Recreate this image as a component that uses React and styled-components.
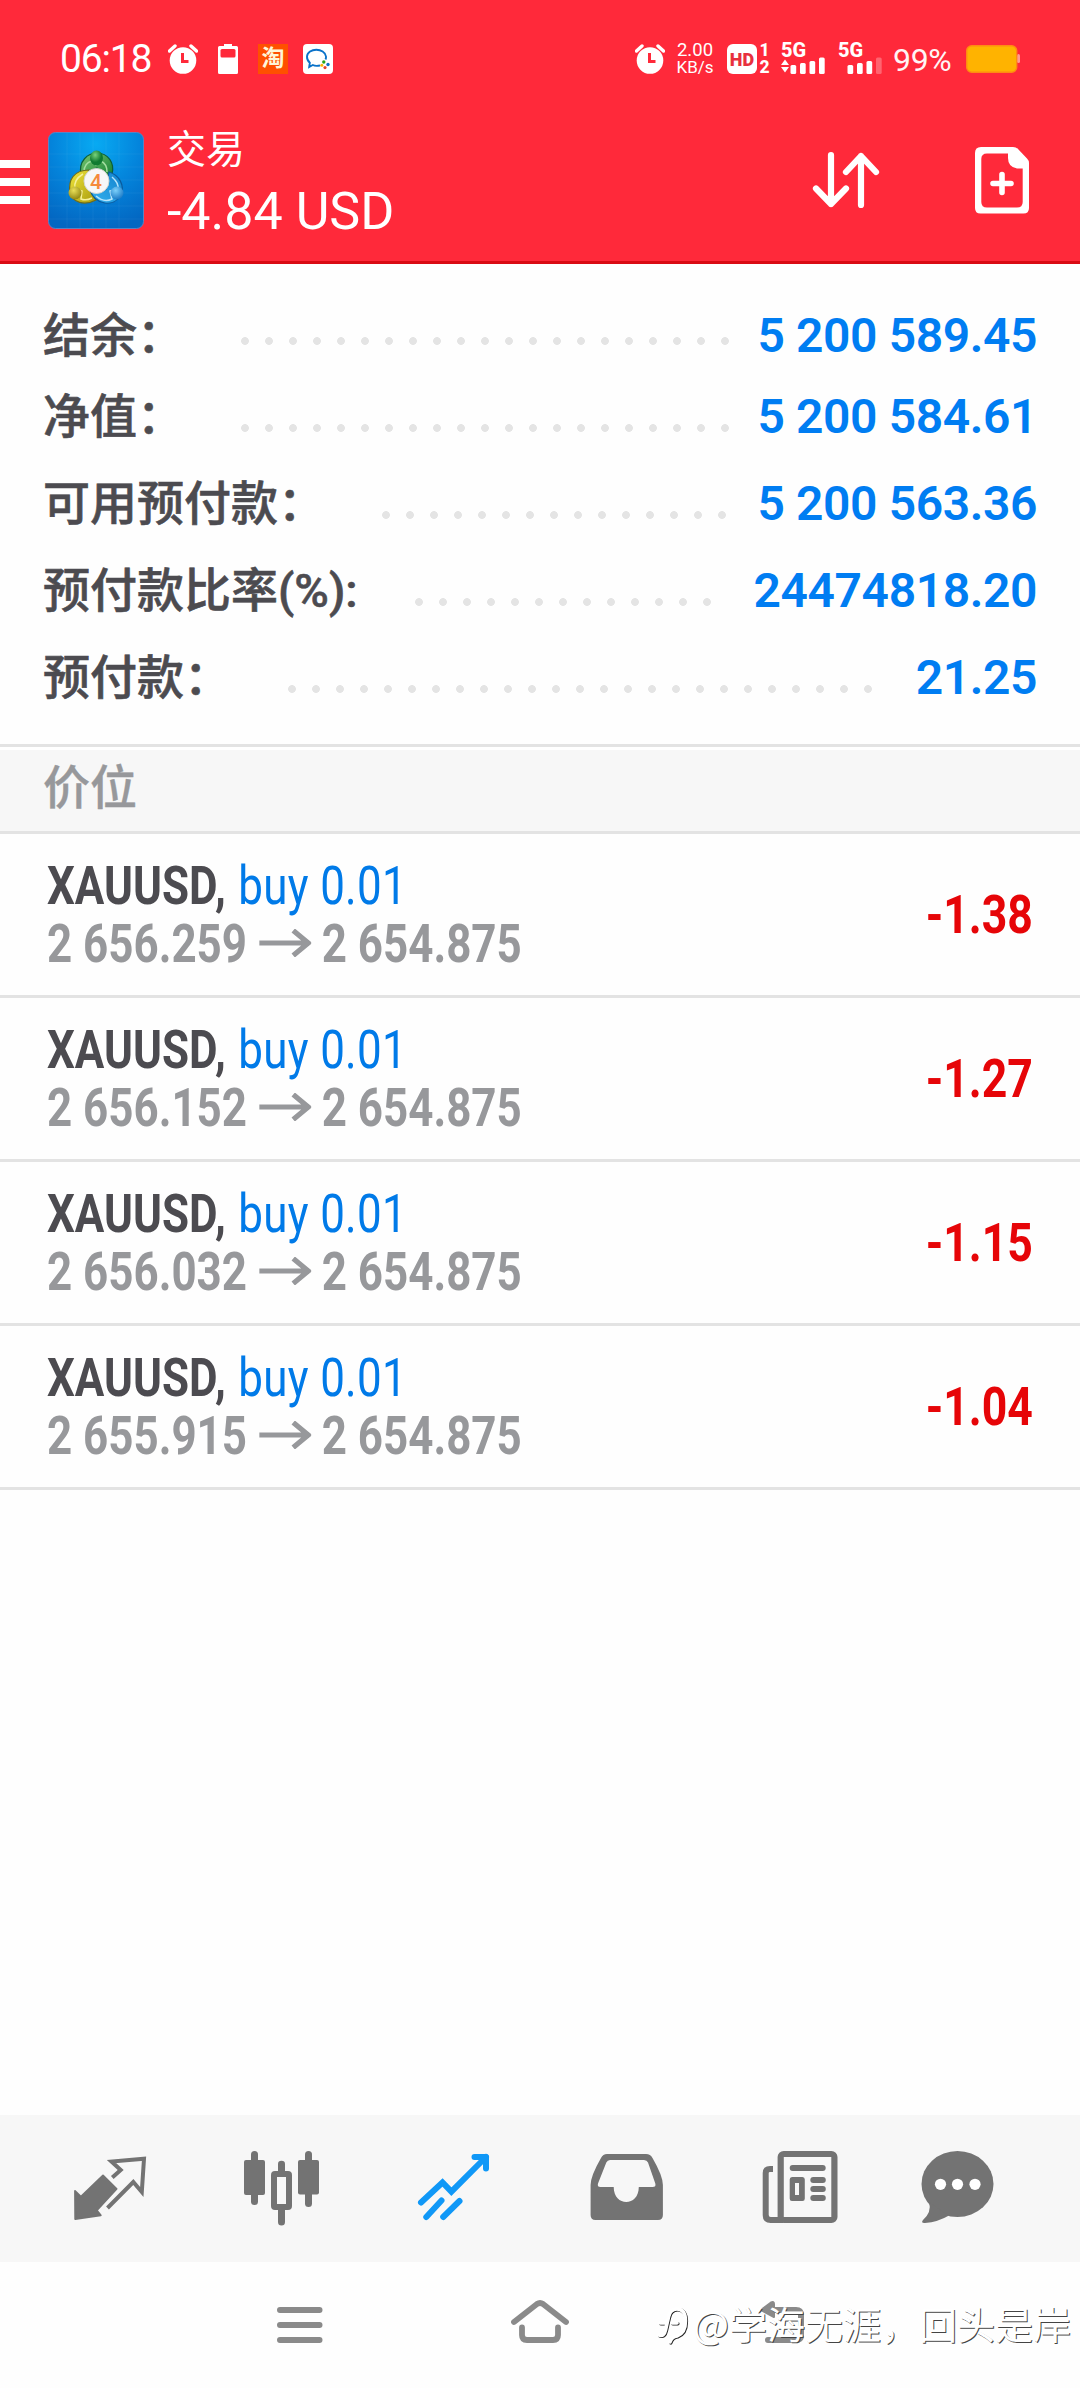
import React from 'react'
import styled, { createGlobalStyle } from 'styled-components'

const summary = [
    { label: '结余：', value: '5 200 589.45' },
    { label: '净值：', value: '5 200 584.61' },
    { label: '可用预付款：', value: '5 200 563.36' },
    { label: '预付款比率(%):', value: '24474818.20' },
    { label: '预付款：', value: '21.25' },
]

const positions = [
    { open: '2 656.259', current: '2 654.875', profit: '-1.38' },
    { open: '2 656.152', current: '2 654.875', profit: '-1.27' },
    { open: '2 656.032', current: '2 654.875', profit: '-1.15' },
    { open: '2 655.915', current: '2 654.875', profit: '-1.04' },
]

function AlarmIcon() {
    return (
        <svg width="30" height="30" viewBox="0 0 30 30">
            <circle cx="15" cy="16.5" r="13.3" fill="#fff" />
            <path d="M1.5 7 L7 2 M28.500 7 L23 2" stroke="#fff" strokeWidth="3.4" strokeLinecap="round" />
            <path d="M14.500 9 V17.500 H20.500" fill="none" stroke="#ff293a" strokeWidth="3" />
        </svg>
    )
}

function SmallBattery() {
    return (
        <svg width="20" height="30" viewBox="0 0 20 30">
            <path d="M6 0 H14 V2 H18.500 Q20 2 20 3.500 V28.500 Q20 30 18.500 30 H1.500 Q0 30 0 28.500 V3.500 Q0 2 1.500 2 H6 Z" fill="#fff" />
            <rect x="2.500" y="5" width="15" height="8.500" rx="1.500" fill="#ff293a" />
        </svg>
    )
}

function WorkChatIcon() {
    return (
        <svg width="30" height="30" viewBox="0 0 30 30">
            <rect width="30" height="30" rx="4" fill="#fff" />
            <path d="M17 21.500 Q12.500 22.500 9.800 21 L6.200 23 L6.800 18.800 Q3.800 16 4 12.500 C4.500 3.500 22 3.500 23 12.500 Q23.200 14 22.500 15.500" fill="none" stroke="#0a72c9" strokeWidth="1.9" />
            <circle cx="20.800" cy="18" r="1.700" fill="#2aa515" />
            <circle cx="25" cy="20.500" r="1.700" fill="#0a72c9" />
            <circle cx="18.800" cy="21.200" r="1.500" fill="#fbb400" />
            <circle cx="22" cy="23.600" r="1.600" fill="#e8452a" />
        </svg>
    )
}

function SignalBars({ weak }) {
    return (
        <svg width="46" height="17" viewBox="0 0 46 17">
            {!weak && <path d="M0 8 L4 2.500 L8 8 Z M0 10 L4 15.500 L8 10 Z" fill="#fff" />}
            <rect x="9.500" y="8" width="5.700" height="9" rx="1.500" fill="#fff" />
            <rect x="19" y="6" width="5.700" height="11" rx="1.500" fill="#fff" />
            <rect x="28.500" y="4" width="5.700" height="13" rx="1.500" fill="#fff" />
            <rect x="38" y="0.500" width="5.700" height="16.500" rx="1.500" fill="#fff" opacity={weak ? 0.28 : 1} />
        </svg>
    )
}

function BatteryIcon() {
    return (
        <svg width="54" height="28" viewBox="0 0 54 28">
            <rect x="51" y="9" width="3" height="9" rx="1.500" fill="#ff9a94" />
            <rect x="0.700" y="0.700" width="50" height="26.600" rx="5" fill="#ffb300" stroke="#ff8a12" strokeWidth="1.400" />
        </svg>
    )
}

function AppLogo() {
    return (
        <svg width="96" height="97" viewBox="0 0 96 97">
            <defs>
                <radialGradient id="sky" cx="0.5" cy="0.12" r="0.9">
                    <stop offset="0" stopColor="#08aaf2" />
                    <stop offset="0.5" stopColor="#0485dc" />
                    <stop offset="1" stopColor="#0367c2" />
                </radialGradient>
                <linearGradient id="green" x1="0" y1="0" x2="1" y2="1">
                    <stop offset="0" stopColor="#7cc873" />
                    <stop offset="1" stopColor="#0b7a2c" />
                </linearGradient>
                <linearGradient id="yellow" x1="0" y1="0" x2="1" y2="1">
                    <stop offset="0" stopColor="#f0e63c" />
                    <stop offset="1" stopColor="#a89a0c" />
                </linearGradient>
                <linearGradient id="blue" x1="1" y1="0" x2="0" y2="1">
                    <stop offset="0" stopColor="#1282cd" />
                    <stop offset="1" stopColor="#35b2f0" />
                </linearGradient>
                <radialGradient id="greenHead" cx="0.4" cy="0.3" r="0.8">
                    <stop offset="0" stopColor="#79d27c" />
                    <stop offset="0.6" stopColor="#107a30" />
                </radialGradient>
                <radialGradient id="yellowHead" cx="0.4" cy="0.3" r="0.8">
                    <stop offset="0" stopColor="#e9df58" />
                    <stop offset="1" stopColor="#857a08" />
                </radialGradient>
                <radialGradient id="blueHead" cx="0.4" cy="0.3" r="0.8">
                    <stop offset="0" stopColor="#7cd0fa" />
                    <stop offset="1" stopColor="#0f6fc0" />
                </radialGradient>
            </defs>
            <rect x="0.500" y="0.500" width="95" height="96" rx="7" fill="url(#sky)" stroke="#5a83c4" />
            <path d="M19 1 V96 M32 1 V96 M45 1 V96 M58 1 V96 M71 1 V96 M1 22 H95 M1 35 H95 M1 48 H95 M1 61 H95 M1 74 H95 M1 87 H95" stroke="#fff" strokeOpacity="0.05" />
            <path d="M33 43 C30 29 40 21 49 21 C60 21 67 31 64 42 L61 50 L49 36 Z" fill="url(#green)" stroke="#0d5f38" strokeWidth="1.200" />
            <path d="M36 40 Q36 31 44 29 L48 33 L53 29 Q59 32 59 40" fill="none" stroke="#a3dda0" strokeWidth="1.500" />
            <path d="M41 38 C26 38 20 48 22 60 C24 71 37 74 48 68 L40 56 Z" fill="url(#yellow)" stroke="#6d6b1c" strokeWidth="1.200" />
            <path d="M35 42 Q25 48 27 57 L34 59 L33 67 Q38 69 44 66" fill="none" stroke="#f6f09a" strokeWidth="1.500" />
            <path d="M61 40 C71 43 77 53 73 63 C66 76 47 73 42 58 L58 57 Z" fill="url(#blue)" stroke="#0b5a9c" strokeWidth="1.200" />
            <path d="M64 45 Q71 51 70 57 L62 59 L64 67 Q56 71 48 64" fill="none" stroke="#b6e4fb" strokeWidth="1.500" />
            <ellipse cx="48.500" cy="26" rx="6.500" ry="7.500" fill="url(#greenHead)" />
            <ellipse cx="27" cy="61" rx="6.500" ry="6.500" fill="url(#yellowHead)" />
            <ellipse cx="69" cy="61" rx="6.500" ry="6.500" fill="url(#blueHead)" />
            <circle cx="48.500" cy="49" r="12.500" fill="#f7f7f7" stroke="#d3d6d0" />
            <text x="48" y="56.500" textAnchor="middle" fontFamily="Roboto, sans-serif" fontWeight="500" fontSize="21" fill="#f58a3c">4</text>
        </svg>
    )
}

function SortIcon() {
    return (
        <svg width="70" height="60" viewBox="0 0 70 60">
            <g fill="none" stroke="#fff" strokeWidth="6.200" strokeLinecap="round" strokeLinejoin="round">
                <path d="M20 5 V54 M5 38.500 L20 54 L35 38.500" />
                <path d="M50 55 V6 M35 22 L50 6 L65 22" />
            </g>
        </svg>
    )
}

function NewOrderIcon() {
    return (
        <svg width="54" height="67" viewBox="0 0 54 67">
            <path fillRule="evenodd" fill="#fff" d="M6 0 H38 Q41 0 43 2 L52 11.500 Q54 13.500 54 16 V61 Q54 66.500 48.500 66.500 H5.500 Q0 66.500 0 61 V6 Q0 0 6 0 Z M12 6.500 Q6.300 6.500 6.300 12 V55 Q6.300 60.500 12 60.500 H42 Q47.700 60.500 47.700 55 V21.500 H42 Q33 20 33 11 V6.500 Z" />
            <path d="M27 27.500 V45.500 M18 36.500 H36" stroke="#fff" strokeWidth="5.600" strokeLinecap="round" />
        </svg>
    )
}

function PriceArrow() {
    return (
        <svg width="64" height="28" viewBox="0 0 52 28" preserveAspectRatio="none">
            <path d="M0 14 H49 M34 1.500 L49 14 L34 26.500" fill="none" stroke="#97989b" strokeWidth="5.200" />
        </svg>
    )
}

function QuotesIcon() {
    return (
        <svg width="100" height="100" viewBox="0 0 100 100">
            <path d="M15 53 L20.900 58.700 L43 37.500 L56.600 51 L36.800 72.300 L40.800 77.300 L15.200 81 Z" fill="#737373" stroke="#737373" strokeWidth="1.800" strokeLinejoin="round" />
            <path d="M52.300 39.500 L60.700 32 L51.500 23.500 L84 20.800 L81.800 54 L73.300 44 L47.500 70" fill="none" stroke="#737373" strokeWidth="4" />
        </svg>
    )
}

function ChartIcon() {
    return (
        <svg width="100" height="100" viewBox="0 0 100 100" fill="#737373">
            <rect x="12" y="22" width="21" height="35" rx="2" />
            <rect x="19" y="13" width="7" height="54" rx="3.500" />
            <rect x="66" y="22" width="21" height="34.500" rx="2" />
            <rect x="73" y="13" width="7" height="56" rx="3.500" />
            <path d="M46 34 V26 Q46 22.700 49.500 22.700 Q53 22.700 53 26 V34 Z M46 71 V84 Q46 87.500 49.500 87.500 Q53 87.500 53 84 V71 Z" />
            <rect x="42" y="36" width="15" height="33" rx="1" fill="#f7f7f7" stroke="#737373" strokeWidth="6" strokeLinejoin="round" />
        </svg>
    )
}

function TradeIcon() {
    return (
        <svg width="100" height="100" viewBox="0 0 100 100">
            <g fill="none" stroke="#1098f7" strokeWidth="6" strokeLinecap="round">
                <path d="M17 64.500 L38.500 44.500 L47.400 53.700 L82 19" strokeLinecap="round" />
                <path d="M22.300 79 L37.500 62.500 M39.200 79 L55.500 63" />
                <path d="M70.500 19 H82 V30.500" strokeLinejoin="round" />
            </g>
            <path d="M74 18 H83 V28 Z" fill="#1098f7" />
        </svg>
    )
}

function HistoryIcon() {
    return (
        <svg width="100" height="100" viewBox="0 0 100 100">
            <path fillRule="evenodd" fill="#737373" d="M31 16 H70 Q74.500 16 76.500 20 Q86.900 38 86.900 47 V77 Q86.900 82 82 82 H19.500 Q14.600 82 14.600 77 V47 Q14.600 38 25 20 Q27 16 31 16 Z M34 22 Q31.500 22 30.300 24.500 L22 45.500 Q21 49 24.500 49 H37.700 C37.700 69 62.800 69 62.800 49 H76.500 Q80.300 49 79.300 45.500 L72 24.500 Q71 22 68 22 Z" />
        </svg>
    )
}

function NewsIcon() {
    return (
        <svg width="100" height="100" viewBox="0 0 100 100" fill="#737373">
            <rect x="32.700" y="16" width="53.700" height="66" rx="3" fill="none" stroke="#737373" strokeWidth="6.200" />
            <path d="M25 31 H22 Q17.700 31 17.700 35 V77 Q17.700 82 22.700 82 H35" fill="none" stroke="#737373" strokeWidth="6" />
            <rect x="41.700" y="27" width="36" height="6" rx="3" />
            <path fillRule="evenodd" d="M44 39 H54.500 Q56.800 39 56.800 41.500 V60.500 Q56.800 63 54.500 63 H44 Q41.700 63 41.700 60.500 V41.500 Q41.700 39 44 39 Z M47 45 V57 H51 V45 Z" />
            <rect x="62.300" y="39" width="15.500" height="6" rx="3" />
            <rect x="62.300" y="48" width="15.500" height="6" rx="3" />
            <rect x="62.300" y="57" width="15.500" height="6" rx="3" />
        </svg>
    )
}

function MessagesIcon() {
    return (
        <svg width="100" height="100" viewBox="0 0 100 100">
            <ellipse cx="37.500" cy="46" rx="36" ry="33" fill="#737373" />
            <path d="M9 64 Q12 74 3 82 Q0.500 85.300 5 85 Q18 84 29 77.500 Z" fill="#737373" />
            <circle cx="20.500" cy="46.300" r="5.600" fill="#fff" />
            <circle cx="37.500" cy="46.300" r="5.600" fill="#fff" />
            <circle cx="55" cy="46.300" r="5.600" fill="#fff" />
        </svg>
    )
}

function RecentsKey() {
    return (
        <svg width="60" height="60" viewBox="0 0 60 60">
            <path d="M10 15 H49.500 M10 30 H49.500 M10 45 H49.500" stroke="#8a8a8a" strokeWidth="6" strokeLinecap="round" />
        </svg>
    )
}

function HomeKey() {
    return (
        <svg width="60" height="60" viewBox="0 0 60 60">
            <g fill="none" stroke="#8a8a8a" strokeWidth="5.800" strokeLinecap="round" strokeLinejoin="round">
                <path d="M4 27 L27 9 Q30 7 33 9 L56 27" />
                <path d="M12 32.500 V40 Q12 45 17 45 H43 Q48 45 48 40 V32.500" />
            </g>
        </svg>
    )
}

function BackKey() {
    return (
        <svg width="60" height="60" viewBox="0 0 60 60">
            <path d="M18 45 H46 Q51 45 51 40 V20 Q51 15 46 15 H18" fill="none" stroke="#8a8a8a" strokeWidth="6" strokeLinecap="round" />
            <path d="M11 15 L21 7.500 Q24 6 24 9 V22 Z" fill="#8a8a8a" stroke="#8a8a8a" strokeWidth="2" strokeLinejoin="round" />
        </svg>
    )
}

function WatermarkMark() {
    return (
        <svg width="32" height="44" viewBox="0 0 32 44">
            <g fill="none" strokeLinecap="round" strokeLinejoin="round">
                <path d="M2 34 Q7 36 8.500 29 L11.500 16 Q13 8 20 8 Q28.500 8 28.500 20 Q28.500 32 20 35 Q14.500 36 13 41 M3 22 H8.500 M15 22 H20" stroke="#222" strokeWidth="3.600" transform="translate(0.8 0.8)" />
                <path d="M2 34 Q7 36 8.500 29 L11.500 16 Q13 8 20 8 Q28.500 8 28.500 20 Q28.500 32 20 35 Q14.500 36 13 41 M3 22 H8.500 M15 22 H20" stroke="#fff" strokeWidth="3.600" />
            </g>
        </svg>
    )
}

function App() {
    return (
        <Screen>
            <GlobalStyle />
            <Header>
                <StatusBar>
                    <Clock>06:18</Clock>
                    <StatusIcons>
                        <AlarmIcon />
                        <SmallBattery />
                        <Taobao>淘</Taobao>
                        <WorkChatIcon />
                    </StatusIcons>
                    <StatusRight>
                        <AlarmIcon />
                        <NetSpeed>
                            <span>2.00</span>
                            <span>KB/s</span>
                        </NetSpeed>
                        <HdBadge>HD</HdBadge>
                        <SimNumbers>
                            <span>1</span>
                            <span>2</span>
                        </SimNumbers>
                        <Signal>
                            <span>5G</span>
                            <SignalBars />
                        </Signal>
                        <Signal>
                            <span>5G</span>
                            <SignalBars weak />
                        </Signal>
                        <Percent>99%</Percent>
                        <BatteryIcon />
                    </StatusRight>
                </StatusBar>
                <Toolbar>
                    <MenuButton>
                        <i />
                        <i />
                        <i />
                    </MenuButton>
                    <AppLogo />
                    <Titles>
                        <Title>交易</Title>
                        <Total>-4.84 USD</Total>
                    </Titles>
                    <Actions>
                        <SortIcon />
                        <NewOrderIcon />
                    </Actions>
                </Toolbar>
            </Header>

            <Summary>
                {summary.map((item) => (
                    <SummaryRow key={item.label}>
                        <Label>{item.label}</Label>
                        <Dots />
                        <Value>{item.value}</Value>
                    </SummaryRow>
                ))}
            </Summary>

            <SectionTitle>价位</SectionTitle>

            <Positions>
                {positions.map((p) => (
                    <PositionRow key={p.open}>
                        <Details>
                            <Symbol>
                                XAUUSD, <Side>buy 0.01</Side>
                            </Symbol>
                            <Prices>
                                {p.open}
                                <PriceArrow />
                                {p.current}
                            </Prices>
                        </Details>
                        <Profit>{p.profit}</Profit>
                    </PositionRow>
                ))}
            </Positions>

            <TabBar>
                <QuotesIcon />
                <ChartIcon />
                <TradeIcon />
                <HistoryIcon />
                <NewsIcon />
                <MessagesIcon />
            </TabBar>

            <SystemNav>
                <RecentsKey />
                <HomeKey />
                <BackKey />
                <Watermark>
                    <WatermarkMark />
                    <span>@学海无涯，回头是岸</span>
                </Watermark>
            </SystemNav>
        </Screen>
    )
}

export default App

const GlobalStyle = createGlobalStyle`
    body {
        margin: 0;
        background: #fff;
    }

    svg {
        display: block;
        flex-shrink: 0;
    }
`

const Screen = styled.div`
    width: 1080px;
    height: 2388px;
    display: flex;
    flex-direction: column;
    overflow: hidden;
    background: #fefefe;
    font-family: Roboto, "Noto Sans CJK SC", sans-serif;
    white-space: nowrap;
`

const Header = styled.div`
    box-sizing: border-box;
    height: 264px;
    background: #ff293a;
    border-bottom: 3px solid #d90b14;
    color: #fff;
`

const StatusBar = styled.div`
    height: 118px;
    display: flex;
    align-items: center;
    padding: 0 60px;
`

const Clock = styled.div`
    width: 108px;
    font-size: 39px;
    letter-spacing: -1.2px;
`

const StatusIcons = styled.div`
    display: flex;
    align-items: center;

    svg:nth-child(2) {
        margin: 0 20px;
    }

    svg:nth-child(4) {
        margin-left: 15px;
    }
`

const Taobao = styled.div`
    width: 30px;
    height: 30px;
    background: #ff5000;
    color: #fff6d8;
    font-size: 23px;
    font-weight: 700;
    line-height: 30px;
    text-align: center;
`

const StatusRight = styled.div`
    margin-left: auto;
    display: flex;
    align-items: center;
`

const NetSpeed = styled.div`
    width: 40px;
    margin-left: 10px;
    display: flex;
    flex-direction: column;
    align-items: center;
    font-size: 18.5px;
    line-height: 17px;

    span + span {
        font-size: 17px;
    }
`

const HdBadge = styled.div`
    width: 30px;
    height: 30px;
    margin-left: 12px;
    border-radius: 6px;
    background: #fff;
    color: #e8303e;
    font-size: 18px;
    font-weight: 900;
    line-height: 31px;
    text-align: center;
`

const SimNumbers = styled.div`
    width: 13px;
    margin-left: 1px;
    display: flex;
    flex-direction: column;
    align-items: center;
    font-size: 17.5px;
    font-weight: 800;
    line-height: 17px;
`

const Signal = styled.div`
    width: 46px;
    height: 30px;
    margin-left: 10px;
    display: flex;
    flex-direction: column;
    font-size: 20px;
    font-weight: 800;
    line-height: 13px;

    & + & {
        margin-left: 11px;
    }
`

const Percent = styled.div`
    width: 64px;
    margin: 2px 9px 0 9px;
    font-size: 32px;
    font-weight: 400;
    letter-spacing: -0.3px;
    opacity: 0.95;
`

const Toolbar = styled.div`
    height: 124px;
    display: flex;
    align-items: center;
    padding-right: 51px;
`

const MenuButton = styled.div`
    width: 30px;
    margin: 4px 18px 0 0;
    display: flex;
    flex-direction: column;
    gap: 10px;

    i {
        height: 8px;
        background: #fff;
    }
`

const Titles = styled.div`
    margin: 2px 0 0 23px;
    line-height: 61px;
`

const Title = styled.div`
    font-size: 39px;
`

const Total = styled.div`
    font-size: 52px;
`

const Actions = styled.div`
    margin-left: auto;
    display: flex;
    align-items: center;
    gap: 94px;
`

const Summary = styled.div`
    box-sizing: border-box;
    height: 480px;
    padding-top: 22px;
`

const Label = styled.div`
    color: #4c4b50;
    font-size: 47px;
    font-weight: 500;
    line-height: 58px;
    -webkit-text-stroke: 0.6px #4c4b50;
`

const Value = styled.div`
    color: #007df2;
    font-size: 48px;
    font-weight: 600;
    letter-spacing: -0.4px;
    line-height: 58px;
`

const Dots = styled.div`
    flex: 1;
    height: 8px;
    margin: 23px 28px 0 49px;
    background: radial-gradient(circle, #e4e4e4 3.500px, transparent 4.300px) 0 0 / 24px 8px;
`

const SummaryRow = styled.div`
    height: 87px;
    display: flex;
    align-items: center;
    padding: 0 43px;

    &:first-child ${Label}, &:first-child ${Value} {
        margin-top: 12px;
    }
`

const SectionTitle = styled.div`
    box-sizing: border-box;
    height: 90px;
    padding-left: 43px;
    border-top: 3px solid #e3e3e3;
    border-bottom: 3px solid #e3e3e3;
    box-shadow: inset 0 3px 0 #fff;
    background: #f7f7f7;
    color: #97989b;
    font-size: 47px;
    font-weight: 500;
    line-height: 82px;
    -webkit-text-stroke: 0.4px #97989b;
`

const Positions = styled.div`
    flex: 1;
`

const PositionRow = styled.div`
    box-sizing: border-box;
    height: 164px;
    display: flex;
    align-items: center;
    justify-content: space-between;
    padding: 0 47px;
    border-bottom: 3px solid #e3e3e3;
    font-size: 54px;
    font-weight: 700;
    line-height: 58px;
`

const Details = styled.div`
    transform: scaleX(0.813);
    transform-origin: left;
`

const Symbol = styled.div`
    color: #4c4b50;
`

const Side = styled.span`
    margin-left: 2px;
    color: #007ae8;
    font-weight: 450;
    letter-spacing: 0.4px;
`

const Prices = styled.div`
    display: flex;
    align-items: center;
    color: #97989b;

    svg {
        margin: -2px 13px 0 15px;
    }
`

const Profit = styled.div`
    color: #e60508;
    transform: scaleX(0.825);
    transform-origin: right;
`

const TabBar = styled.div`
    height: 147px;
    box-sizing: border-box;
    display: flex;
    align-items: center;
    gap: 72px;
    padding: 0 60px 1px;
    background: #f7f7f7;
`

const SystemNav = styled.div`
    position: relative;
    height: 126px;
    display: grid;
    grid-template-columns: repeat(3, 240px);
    justify-content: center;
    justify-items: center;
    align-items: center;
`

const Watermark = styled.div`
    position: absolute;
    right: 9px;
    bottom: 38px;
    display: flex;
    align-items: center;
    gap: 4px;
    color: #fff;
    font-family: "Noto Sans CJK SC", sans-serif;
    font-size: 38px;
    line-height: 54px;
    text-shadow: 1px 1px 0 #444;
`
